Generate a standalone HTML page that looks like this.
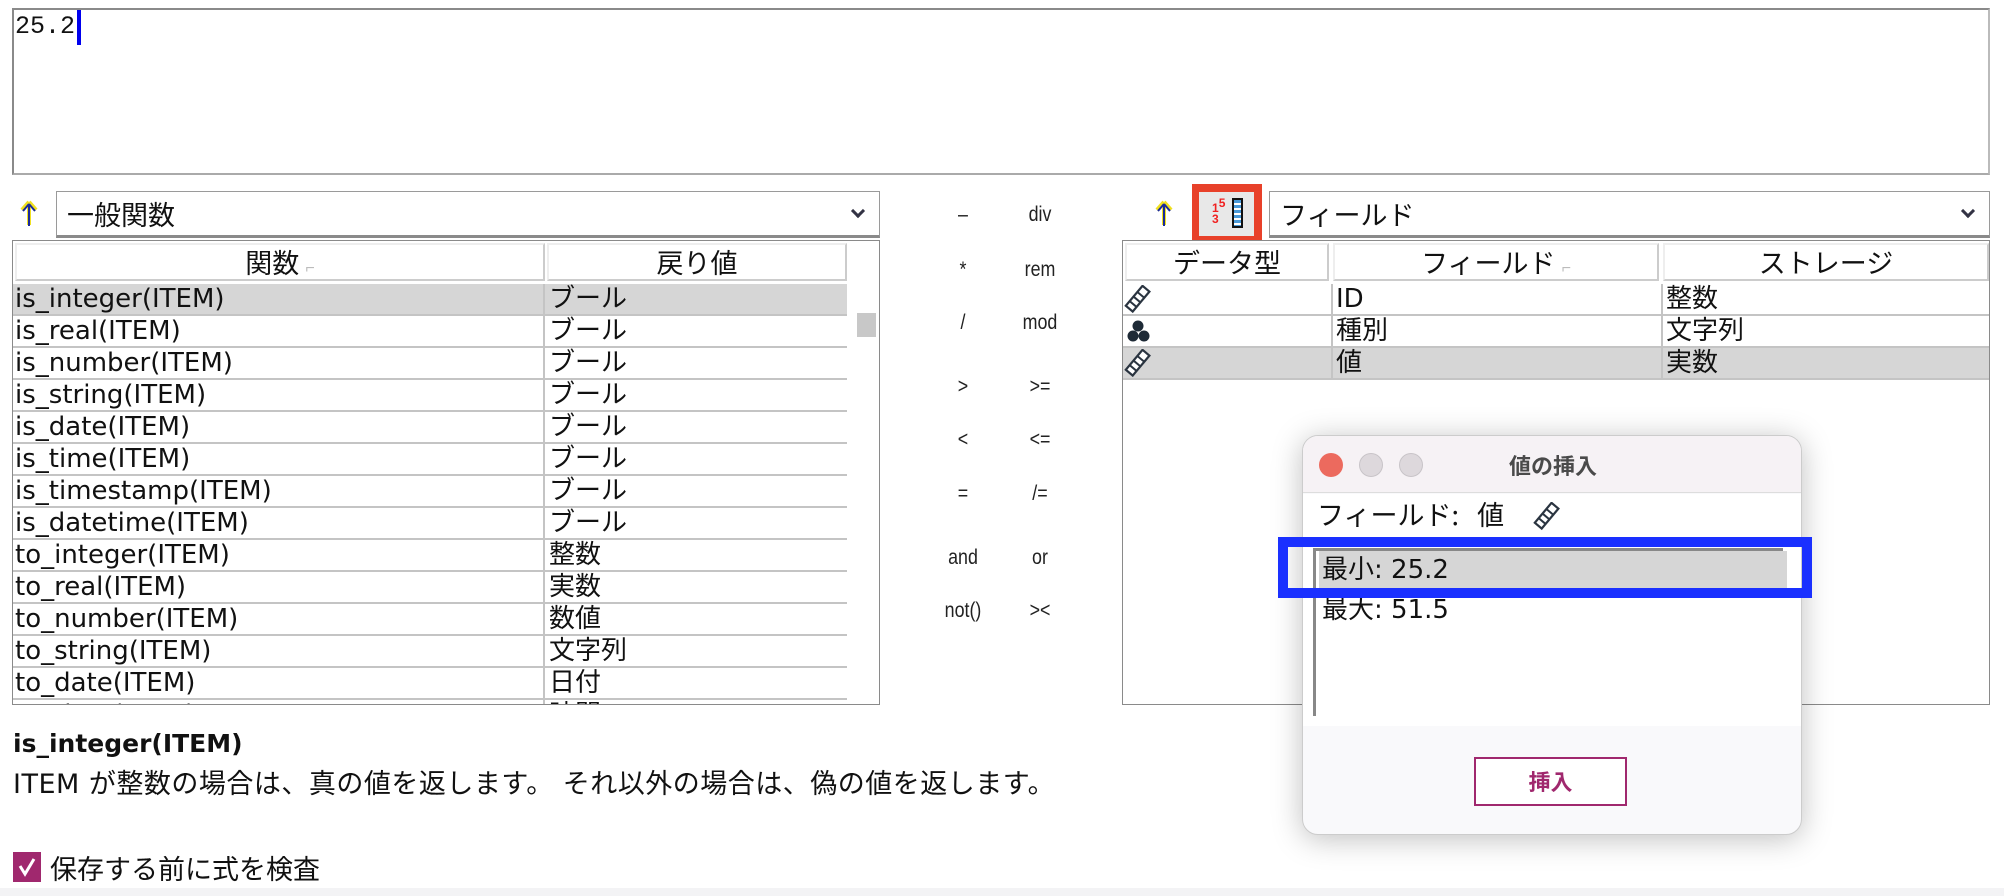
<!DOCTYPE html>
<html><head><meta charset="utf-8"><style>
*{margin:0;padding:0;box-sizing:border-box}
body{width:2004px;height:896px;background:#fff;position:relative;overflow:hidden;font-family:"DejaVu Sans","Noto Sans CJK JP",sans-serif;color:#111}
.a{position:absolute}
.ta{left:12px;top:8px;width:1978px;height:167px;border:2px solid #8a8a8a;border-right-color:#bbb;border-bottom-color:#aaa}
.dd{height:47px;border:1px solid #9a9a9a;border-bottom:3px solid #8a8a8a;background:#fff;font-size:27px;padding-left:10px;line-height:44px;font-family:"Noto Sans CJK JP",sans-serif}
.chev{position:absolute;right:16px;top:14px;width:10px;height:10px;border-right:3px solid #334;border-bottom:3px solid #334;transform:rotate(45deg)}
.tbl{border:1px solid #8a8a8a;background:#fff;overflow:hidden}
.hd{position:absolute;top:2px;height:38px;border:2px solid #ccc;border-top-color:#eee;border-left-color:#eee;text-align:center;font-size:27px;line-height:34px;background:#fff;font-family:"Noto Sans CJK JP",sans-serif}
.row{position:absolute;left:0;height:32px;border-bottom:2px solid #c4c4c4;font-size:26px;line-height:31px}
.row span{position:absolute;top:0;white-space:nowrap}
.sel{background:#d6d6d6}
.op{position:absolute;width:80px;margin-left:-40px;text-align:center;font-size:21px;color:#222;transform:scaleX(.85);font-family:"Liberation Sans",sans-serif}
</style></head><body>
<svg width="0" height="0" style="position:absolute"><defs>
<g id="rul"><g transform="rotate(-50 14 14)"><rect x="1" y="9" width="26" height="9" fill="#fff" stroke="#2a3440" stroke-width="2.2"/><path d="M7 9v9M13 9v9M19 9v9" stroke="#2a3440" stroke-width="2"/></g></g>
</defs></svg>
<div class="a ta"></div>
<div class="a" style="left:15px;top:10px;font-family:'Liberation Mono',monospace;font-size:25px;line-height:34px;">25.2</div>
<div class="a" style="left:77px;top:10px;width:4px;height:35px;background:#0000ee"></div>

<svg class="a" style="left:19px;top:199px" width="20" height="28" viewBox="0 0 20 28"><path d="M10 3 L3 11 M10 3 L17 11 M10 3 V26" stroke="#f0e020" stroke-width="4" fill="none"/><path d="M10 5 L4 12 M10 5 L16 12 M10 5 V27" stroke="#1a2a9a" stroke-width="2" fill="none"/></svg>
<div class="a dd" style="left:56px;top:191px;width:824px">一般関数<span class="chev"></span></div>

<div class="a tbl" style="left:12px;top:240px;width:868px;height:465px">
 <div class="hd" style="left:2px;width:530px">関数 <span style="color:#bbb;font-size:16px">⌐</span></div>
 <div class="hd" style="left:534px;width:300px">戻り値</div>
 <div class="a" style="left:844px;top:72px;width:19px;height:24px;background:#c8c8c8"></div>
 <div id="lrows"></div>
</div>

<div class="op" style="left:963px;top:203px">–</div><div class="op" style="left:1040px;top:203px">div</div>
<div class="op" style="left:963px;top:258px">*</div><div class="op" style="left:1040px;top:258px">rem</div>
<div class="op" style="left:963px;top:311px">/</div><div class="op" style="left:1040px;top:311px">mod</div>
<div class="op" style="left:963px;top:375px">&gt;</div><div class="op" style="left:1040px;top:375px">&gt;=</div>
<div class="op" style="left:963px;top:428px">&lt;</div><div class="op" style="left:1040px;top:428px">&lt;=</div>
<div class="op" style="left:963px;top:482px">=</div><div class="op" style="left:1040px;top:482px">/=</div>
<div class="op" style="left:963px;top:546px">and</div><div class="op" style="left:1040px;top:546px">or</div>
<div class="op" style="left:963px;top:599px">not()</div><div class="op" style="left:1040px;top:599px">&gt;&lt;</div>

<svg class="a" style="left:1154px;top:199px" width="20" height="28" viewBox="0 0 20 28"><path d="M10 3 L3 11 M10 3 L17 11 M10 3 V26" stroke="#f0e020" stroke-width="4" fill="none"/><path d="M10 5 L4 12 M10 5 L16 12 M10 5 V27" stroke="#1a2a9a" stroke-width="2" fill="none"/></svg>
<div class="a" style="left:1192px;top:184px;width:70px;height:60px;background:#e8412a"></div>
<div class="a" style="left:1199px;top:192px;width:55px;height:44px;background:#e8e8e8"></div>
<div class="a" style="left:1212px;top:198px;color:#f02020;font-size:12px;font-weight:bold;line-height:11px;font-family:'Liberation Sans'">1<sup style="font-size:12px">5</sup><br>3</div>
<div class="a" style="left:1232px;top:198px;width:11px;height:30px;background:#111;padding:2px"><div style="width:7px;height:26px;background:repeating-linear-gradient(#4a9ad8 0 3px,#fff 3px 5px)"></div></div>
<div class="a dd" style="left:1269px;top:191px;width:721px">フィールド<span class="chev"></span></div>

<div class="a tbl" style="left:1122px;top:240px;width:868px;height:465px">
 <div class="hd" style="left:2px;width:204px">データ型</div>
 <div class="hd" style="left:210px;width:326px">フィールド <span style="color:#bbb;font-size:16px">⌐</span></div>
 <div class="hd" style="left:540px;width:326px">ストレージ</div>
 <div class="row" style="top:43px;width:868px"><svg style="position:absolute;left:1px;top:1px" width="30" height="30"><use href="#rul"/></svg><span style="left:213px">ID</span><span style="left:543px">整数</span></div>
 <div class="row" style="top:75px;width:868px"><svg style="position:absolute;left:3px;top:3px" width="28" height="26"><circle cx="12" cy="7" r="5.5" fill="#1e2a36"/><circle cx="7" cy="17" r="5.5" fill="#1e2a36"/><circle cx="18" cy="17" r="5.5" fill="#1e2a36"/></svg><span style="left:213px">種別</span><span style="left:543px">文字列</span></div>
 <div class="row sel" style="top:107px;width:868px"><svg style="position:absolute;left:1px;top:1px" width="30" height="30"><use href="#rul"/></svg><span style="left:213px">値</span><span style="left:543px">実数</span></div>
 <div class="a" style="left:208px;top:43px;width:2px;height:96px;background:#c4c4c4"></div>
 <div class="a" style="left:538px;top:43px;width:2px;height:96px;background:#c4c4c4"></div>
</div>

<div class="a" style="left:13px;top:729px;font-size:25px;font-weight:bold">is_integer(ITEM)</div>
<div class="a" style="left:13px;top:762px;font-size:27px;font-family:'DejaVu Sans','Noto Sans CJK JP',sans-serif;letter-spacing:0.5px">ITEM が整数の場合は、真の値を返します。 それ以外の場合は、偽の値を返します。</div>
<div class="a" style="left:13px;top:852px;width:28px;height:30px;background:#a0286e"></div>
<svg class="a" style="left:13px;top:852px" width="28" height="30"><path d="M7 14 L12 22 L21 7" stroke="#fff" stroke-width="3" fill="none"/></svg>
<div class="a" style="left:50px;top:848px;font-size:27px;font-family:'Noto Sans CJK JP',sans-serif">保存する前に式を検査</div>
<div class="a" style="left:0;top:888px;width:2004px;height:8px;background:#f3f3f5"></div>

<div class="a" style="left:1302px;top:435px;width:500px;height:400px;border-radius:16px;background:#f9f9fb;box-shadow:0 4px 30px rgba(0,0,0,.25);border:1px solid #ccc;overflow:hidden">
 <div class="a" style="left:0;top:0;width:500px;height:57px;background:#f6f2f5;border-bottom:1px solid #ddd"></div>
 <div class="a" style="left:16px;top:17px;width:24px;height:24px;border-radius:50%;background:#ec6a5e"></div>
 <div class="a" style="left:56px;top:17px;width:24px;height:24px;border-radius:50%;background:#ddd8dc;border:1px solid #c8c4c8"></div>
 <div class="a" style="left:96px;top:17px;width:24px;height:24px;border-radius:50%;background:#ddd8dc;border:1px solid #c8c4c8"></div>
 <div class="a" style="left:0;top:13px;width:500px;text-align:center;font-size:22px;font-weight:bold;color:#4a4a4a;font-family:'Noto Sans CJK JP',sans-serif">値の挿入</div>
 <div class="a" style="left:0;top:58px;width:500px;height:232px;background:#fff"></div>
 <div class="a" style="left:14px;top:58px;font-size:27px;font-family:'Noto Sans CJK JP',sans-serif">フィールド: &nbsp;&nbsp;値</div>
 <svg class="a" style="left:230px;top:66px" width="30" height="30"><use href="#rul"/></svg>
 <div class="a" style="left:10px;top:112px;width:3px;height:168px;background:#888"></div>
 <div class="a" style="left:10px;top:112px;width:470px;height:3px;background:#888"></div>
 <div class="a" style="left:16px;top:115px;width:468px;height:38px;background:#d6d6d6"></div>
 <div class="a" style="left:19px;top:115px;font-size:26px;line-height:38px">最小: 25.2</div>
 <div class="a" style="left:19px;top:155px;font-size:26px;line-height:38px">最大: 51.5</div>
 <div class="a" style="left:171px;top:321px;width:153px;height:49px;border:2px solid #a0286e;background:#fff;color:#a0286e;font-weight:bold;font-size:22px;text-align:center;line-height:45px;font-family:'Noto Sans CJK JP',sans-serif">挿入</div>
</div>
<div class="a" style="left:1278px;top:537px;width:534px;height:61px;border:10px solid #1a30ff"></div>

<script>
var d=[["is_integer(ITEM)","ブール"],["is_real(ITEM)","ブール"],["is_number(ITEM)","ブール"],["is_string(ITEM)","ブール"],["is_date(ITEM)","ブール"],["is_time(ITEM)","ブール"],["is_timestamp(ITEM)","ブール"],["is_datetime(ITEM)","ブール"],["to_integer(ITEM)","整数"],["to_real(ITEM)","実数"],["to_number(ITEM)","数値"],["to_string(ITEM)","文字列"],["to_date(ITEM)","日付"],["to_time(ITEM)","時間"]];
var h="";d.forEach(function(r,i){h+='<div class="row'+(i==0?' sel':'')+'" style="top:'+(43+32*i)+'px;width:834px"><span style="left:2px">'+r[0]+'</span><span style="left:536px">'+r[1]+'</span></div>';});
document.getElementById("lrows").innerHTML=h+'<div class="a" style="left:530px;top:43px;width:2px;height:422px;background:#c4c4c4"></div>';
</script>
</body></html>
